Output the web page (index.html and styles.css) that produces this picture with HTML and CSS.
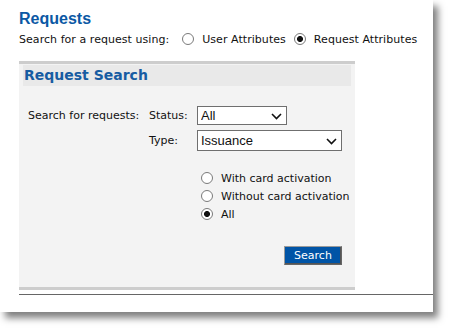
FILE: index.html
```html
<!DOCTYPE html>
<html>
<head>
    <title>Requests</title>
    <link rel="stylesheet" href="styles.css">
</head>
<body>

<div class="page">
    <h1 class="title">Requests</h1>
    <div class="using">
        <span>Search for a request using:</span>
        <label class="opt"><input type="radio" name="using"> User Attributes</label>
        <label class="opt"><input type="radio" name="using" checked> Request Attributes</label>
    </div>

    <div class="panel">
        <h2 class="panel-head">Request Search</h2>
        <div class="search-form">
            <span class="lbl">Search for requests:</span>
            <span class="lbl">Status:</span>
            <span class="sel sel-status">
                <select><option>All</option></select>
                <svg class="chev" width="11" height="7" viewBox="0 0 11 7"><path d="M1 1 L5.5 5.5 L10 1" fill="none" stroke="#111" stroke-width="1.6"/></svg>
            </span>

            <span></span>
            <span class="lbl">Type:</span>
            <span class="sel sel-type">
                <select><option>Issuance</option></select>
                <svg class="chev" width="11" height="7" viewBox="0 0 11 7"><path d="M1 1 L5.5 5.5 L10 1" fill="none" stroke="#111" stroke-width="1.6"/></svg>
            </span>

            <span></span>
            <span></span>
            <div class="activation">
                <label class="opt"><input type="radio" name="act"> With card activation</label>
                <label class="opt"><input type="radio" name="act"> Without card activation</label>
                <label class="opt"><input type="radio" name="act" checked> All</label>
            </div>

            <span></span>
            <span></span>
            <div class="actions">
                <button class="btn">Search</button>
            </div>
        </div>
    </div>
    <div class="rule"></div>
</div>

</body>
</html>
```

FILE: styles.css
```css
html, body { height: 100%; }
body { margin: 0; background: #fff; font-family: 'DejaVu Sans', Verdana, sans-serif; font-size: 11px; color: #111; }

.page {
    width: 433px;
    height: 312px;
    box-sizing: border-box;
    padding: 9px 0 0 19px;
    background: #fff;
    box-shadow: 5px 6px 7px rgba(0,0,0,0.5);
}
.title {
    margin: 0;
    font: bold 16px/19px 'Liberation Sans', Arial, sans-serif;
    color: #0b58a4;
}
.using {
    display: flex;
    align-items: center;
    height: 16px;
    margin-top: 3px;
    letter-spacing: 0.05px;
}
.using .opt { margin-left: 13px; }
.using .opt + .opt { margin-left: 8px; }

.opt {
    display: flex;
    align-items: center;
    gap: 8px;
}
input[type="radio"] {
    -webkit-appearance: none;
    appearance: none;
    width: 12px;
    height: 12px;
    margin: 0;
    border: 1px solid #7a7a7a;
    border-radius: 50%;
    background: #fff;
    box-sizing: border-box;
}
input[type="radio"]:checked {
    background: radial-gradient(circle, #111 0, #111 2.6px, #fff 3.4px);
}

.panel {
    width: 336px;
    height: 229px;
    box-sizing: border-box;
    margin-top: 14px;
    padding: 0 4px;
    background: #f3f3f3;
    border-top: 3px solid #cdcdcd;
    border-bottom: 3px solid #cdcdcd;
}
.panel-head {
    margin: 1px 0 0;
    height: 21px;
    padding-left: 1px;
    background: #e9e9e9;
    font: bold 14px/21px 'DejaVu Sans', Verdana, sans-serif;
    color: #175ca2;
}

.search-form {
    display: grid;
    grid-template-columns: 121px 48px auto;
    align-items: center;
    justify-items: start;
    row-gap: 5px;
    padding: 20px 0 0 5px;
}
.lbl { white-space: nowrap; }

.sel { position: relative; display: block; }
.sel select {
    -webkit-appearance: none;
    appearance: none;
    display: block;
    box-sizing: border-box;
    border: 1px solid #6f6f6f;
    border-radius: 0;
    background: #fff;
    padding: 0 0 0 3px;
    font: 13px 'Liberation Sans', Arial, sans-serif;
    color: #111;
}
.sel-status select { width: 90px; height: 19px; }
.sel-type select { width: 145px; height: 21px; }
.chev { position: absolute; right: 5px; top: 50%; margin-top: -3px; }

.activation {
    display: flex;
    flex-direction: column;
    gap: 6px;
    padding: 16px 0 0 4px;
}
.activation .opt { height: 12px; }

.actions {
    display: flex;
    padding: 21px 0 0 87px;
}
.btn {
    width: 58px;
    height: 19px;
    padding: 0;
    background: #0054a6;
    color: #fff;
    font: 11px 'DejaVu Sans', Verdana, sans-serif;
    border: 1px solid;
    border-color: #9a9a9a #666 #666 #9a9a9a;
    box-shadow: inset -1px -1px 0 #555;
}

.rule {
    margin-top: 4px;
    height: 1px;
    background: #666;
}
```
